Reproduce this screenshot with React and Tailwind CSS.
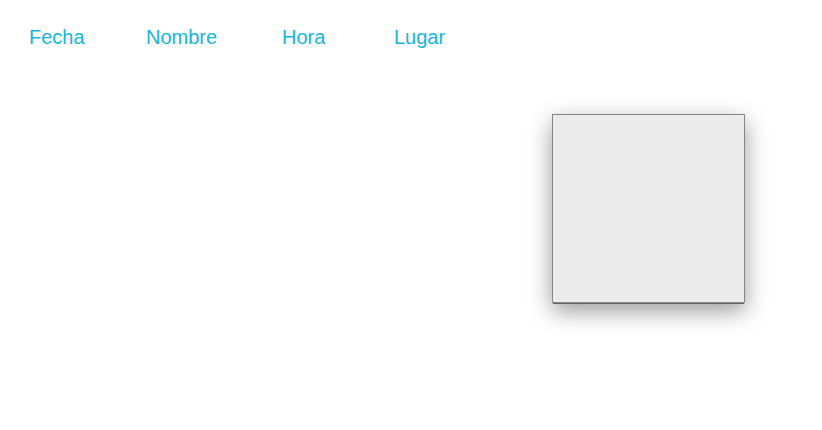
export default function App() {
  return (
    <div className="w-[822px] h-[430px] bg-white overflow-hidden" style={{ fontFamily: '"Liberation Sans", Arial, sans-serif' }}>
      <nav className="flex pt-[26px] pl-[29px] text-[20px] leading-[23px] text-[#16b4e0]">
        <span className="w-[117px]">Fecha</span>
        <span className="w-[136px]">Nombre</span>
        <span className="w-[112px]">Hora</span>
        <span>Lugar</span>
      </nav>
      <div className="flex justify-end pr-[77px] mt-[65px]">
        <div className="w-[193px] h-[189px] bg-[#ebebeb] border border-[#858585] shadow-[0_2px_0_-1px_#666,0_8px_22px_rgba(0,0,0,0.4)]" />
      </div>
    </div>
  );
}
